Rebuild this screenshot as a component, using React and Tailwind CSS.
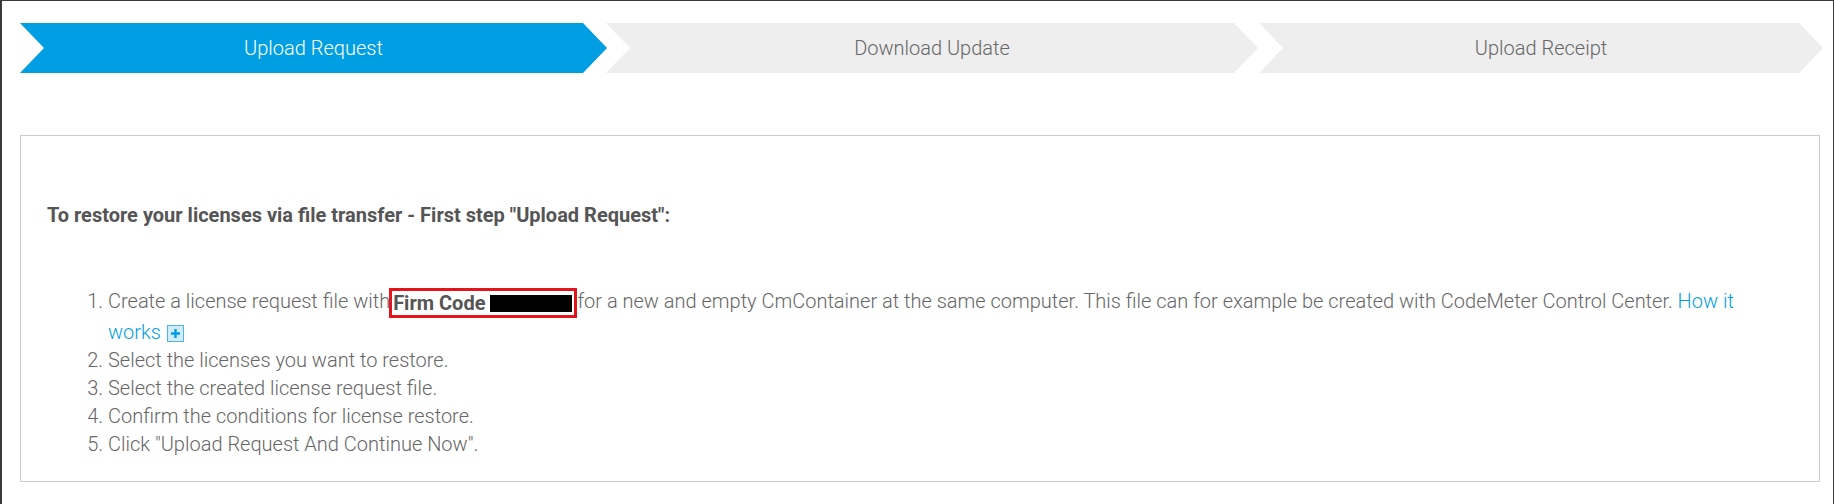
import React from "react";

function Step({ label, active, className }) {
  return (
    <div
      className={`${className} h-[50px] flex items-center justify-center [clip-path:polygon(0_0,calc(100%-24px)_0,100%_50%,calc(100%-24px)_100%,0_100%,24px_50%)] ${
        active ? "bg-[#009fe3] text-white" : "bg-[#eeeeee] text-[#666666]"
      }`}
    >
      <span className="text-[20px] font-light leading-none">{label}</span>
    </div>
  );
}

function PlusIcon() {
  return (
    <svg width="17" height="17" viewBox="0 0 17 17" className="inline-block align-[-3px] ml-[6px]">
      <rect x="0.5" y="0.5" width="16" height="16" fill="#d3ecfb" stroke="#4fb6ea" />
      <path d="M8.5 4v9M4 8.5h9" stroke="#009fe3" strokeWidth="2.4" />
    </svg>
  );
}

export default function App() {
  return (
    <div className="w-[1834px] h-[504px] bg-white border-l-2 border-t border-r border-[#3a3a3a] pl-[18px] pt-[22px] font-['Roboto',sans-serif] overflow-hidden">
      <div className="flex">
        <Step label="Upload Request" active className="w-[587px]" />
        <Step label="Download Update" className="w-[652px] ml-[-1px]" />
        <Step label="Upload Receipt" className="w-[564px] ml-px" />
      </div>

      <div className="mt-[62px] w-[1800px] h-[347px] border border-[#cccccc] pl-[26px] pr-[50px] pt-[66px]">
        <p className="text-[20px] leading-[26px] font-bold text-[#555555]">
          To restore your licenses via file transfer - First step "Upload Request":
        </p>
        <ol className="mt-[59px] list-decimal pl-[61px] text-[20px] leading-[28px] font-light text-[#666666]">
          <li>
            Create a license request file with
            <span className="inline-block border-[3px] border-[#e3141c] pl-[1px] pr-[2px] leading-[24px] align-[-2px] ml-[-1px]">
              <span className="font-bold text-[#555555]">Firm Code </span>
              <span className="inline-block bg-black w-[82px] h-[17px] align-[-2px]"></span>
            </span>
            for a new and empty CmContainer at the same computer. This file can for example be created with CodeMeter Control Center.{" "}
            <span className="text-[#009fe3]">
              How it works
              <PlusIcon />
            </span>
          </li>
          <li>Select the licenses you want to restore.</li>
          <li>Select the created license request file.</li>
          <li>Confirm the conditions for license restore.</li>
          <li>Click "Upload Request And Continue Now".</li>
        </ol>
      </div>
    </div>
  );
}
